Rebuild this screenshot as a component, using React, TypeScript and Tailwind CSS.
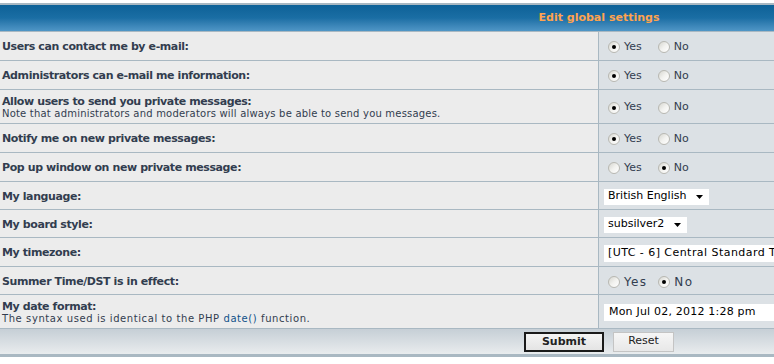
import React from "react";

const FONT = { fontFamily: '"DejaVu Sans", Verdana, sans-serif' };

function Radio({ checked }: { checked?: boolean }) {
  return (
    <span className="relative inline-block w-[12px] h-[12px] rounded-full border border-[#b8b8b2] bg-gradient-to-br from-[#d6d6d0] via-[#f2f2ef] to-white align-middle">
      {checked && (
        <span className="absolute left-[3px] top-[3px] w-[4px] h-[4px] rounded-full bg-black" />
      )}
    </span>
  );
}

function YesNo({ yes, wide }: { yes: boolean; wide?: boolean }) {
  return (
    <div className={`flex items-center text-[#323d4f] ${wide ? "text-[12px]" : "text-[11px]"}`}>
      <span className="ml-[4px] flex items-center">
        <Radio checked={yes} />
      </span>
      <span className={wide ? "ml-[4px] tracking-[1.3px]" : "ml-[4px]"}>Yes</span>
      <span className={wide ? "ml-[11px] flex items-center" : "ml-[16px] flex items-center"}>
        <Radio checked={!yes} />
      </span>
      <span className={wide ? "ml-[4px] tracking-[1.6px]" : "ml-[4px]"}>No</span>
    </div>
  );
}

function Select({ label, w }: { label: string; w: string }) {
  return (
    <div className={`flex items-center justify-between h-[16px] bg-white pl-[4px] pr-[6px] text-[11px] text-black ${w}`}>
      <span>{label}</span>
      <svg width="7" height="4" viewBox="0 0 7 4">
        <path d="M0 0h7L3.5 4z" fill="#000" />
      </svg>
    </div>
  );
}

function Row({
  h,
  label,
  note,
  children,
}: {
  h: string;
  label: string;
  note?: React.ReactNode;
  children: React.ReactNode;
}) {
  return (
    <>
      <div className={`${h} bg-[#ececec] flex flex-col justify-center pl-[2px] pt-[2px] text-[#323d4f]`}>
        <div className="font-bold text-[11px] leading-[12px] tracking-[-0.4px]">{label}</div>
        {note}
      </div>
      <div className={`${h} bg-[#dce1e5] flex items-center pl-[5px] pt-[2px]`}>{children}</div>
    </>
  );
}

export default function App() {
  return (
    <div className="w-[774px] h-[364px] overflow-hidden bg-white" style={FONT}>
      <div className="pt-[3px] w-[1198px]">
        <div className="bg-[#a9b8c2] pt-[2px] pb-[3px] grid grid-cols-[598px_599px] gap-px">
          <div className="col-span-2 h-[26px] bg-gradient-to-b from-[#0d6197] via-[#1a6ea4] to-[#4f96c6] flex items-center justify-center pt-[1px]">
            <span className="text-[#ffa34f] font-bold text-[11px]">Edit global settings</span>
          </div>
          <Row h="h-[28px]" label="Users can contact me by e-mail:">
            <YesNo yes />
          </Row>
          <Row h="h-[28px]" label="Administrators can e-mail me information:">
            <YesNo yes />
          </Row>
          <Row
            h="h-[33px]"
            label="Allow users to send you private messages:"
            note={
              <div className="text-[10px] leading-[11px] tracking-[0.2px]">
                Note that administrators and moderators will always be able to send you messages.
              </div>
            }
          >
            <YesNo yes />
          </Row>
          <Row h="h-[28px]" label="Notify me on new private messages:">
            <YesNo yes />
          </Row>
          <Row h="h-[28px]" label="Pop up window on new private message:">
            <YesNo yes={false} />
          </Row>
          <Row h="h-[27px]" label="My language:">
            <Select label="British English" w="w-[105px]" />
          </Row>
          <Row h="h-[27px]" label="My board style:">
            <Select label="subsilver2" w="w-[83px]" />
          </Row>
          <Row h="h-[28px]" label="My timezone:">
            <div className="h-[17px] w-[400px] bg-white pl-[4px] text-[11px] tracking-[0.45px] text-black flex items-center whitespace-nowrap">
              [UTC - 6] Central Standard Time
            </div>
          </Row>
          <Row h="h-[27px]" label="Summer Time/DST is in effect:">
            <YesNo yes={false} wide />
          </Row>
          <Row
            h="h-[33px]"
            label="My date format:"
            note={
              <div className="text-[10px] leading-[11px] tracking-[0.58px]">
                The syntax used is identical to the PHP{" "}
                <span className="text-[#105289]">date()</span> function.
              </div>
            }
          >
            <div className="h-[17px] w-[300px] bg-white pl-[5px] text-[11px] tracking-[0.2px] text-black flex items-center">
              Mon Jul 02, 2012 1:28 pm
            </div>
          </Row>
          <div className="col-span-2 h-[25px] bg-gradient-to-b from-[#c6cfd6] to-[#e9ecee] flex items-center justify-center gap-[9px]">
            <button className="w-[80px] h-[20px] border-2 border-[#1a1a1a] bg-gradient-to-b from-[#f4f4f4] to-[#e4e4e4] text-[11px] font-bold text-[#222]">
              Submit
            </button>
            <button className="w-[61px] h-[20px] border border-[#c4c4c4] bg-gradient-to-b from-[#f6f6f6] to-[#e8e8e8] text-[11px] text-[#222]">
              Reset
            </button>
          </div>
        </div>
      </div>
    </div>
  );
}
